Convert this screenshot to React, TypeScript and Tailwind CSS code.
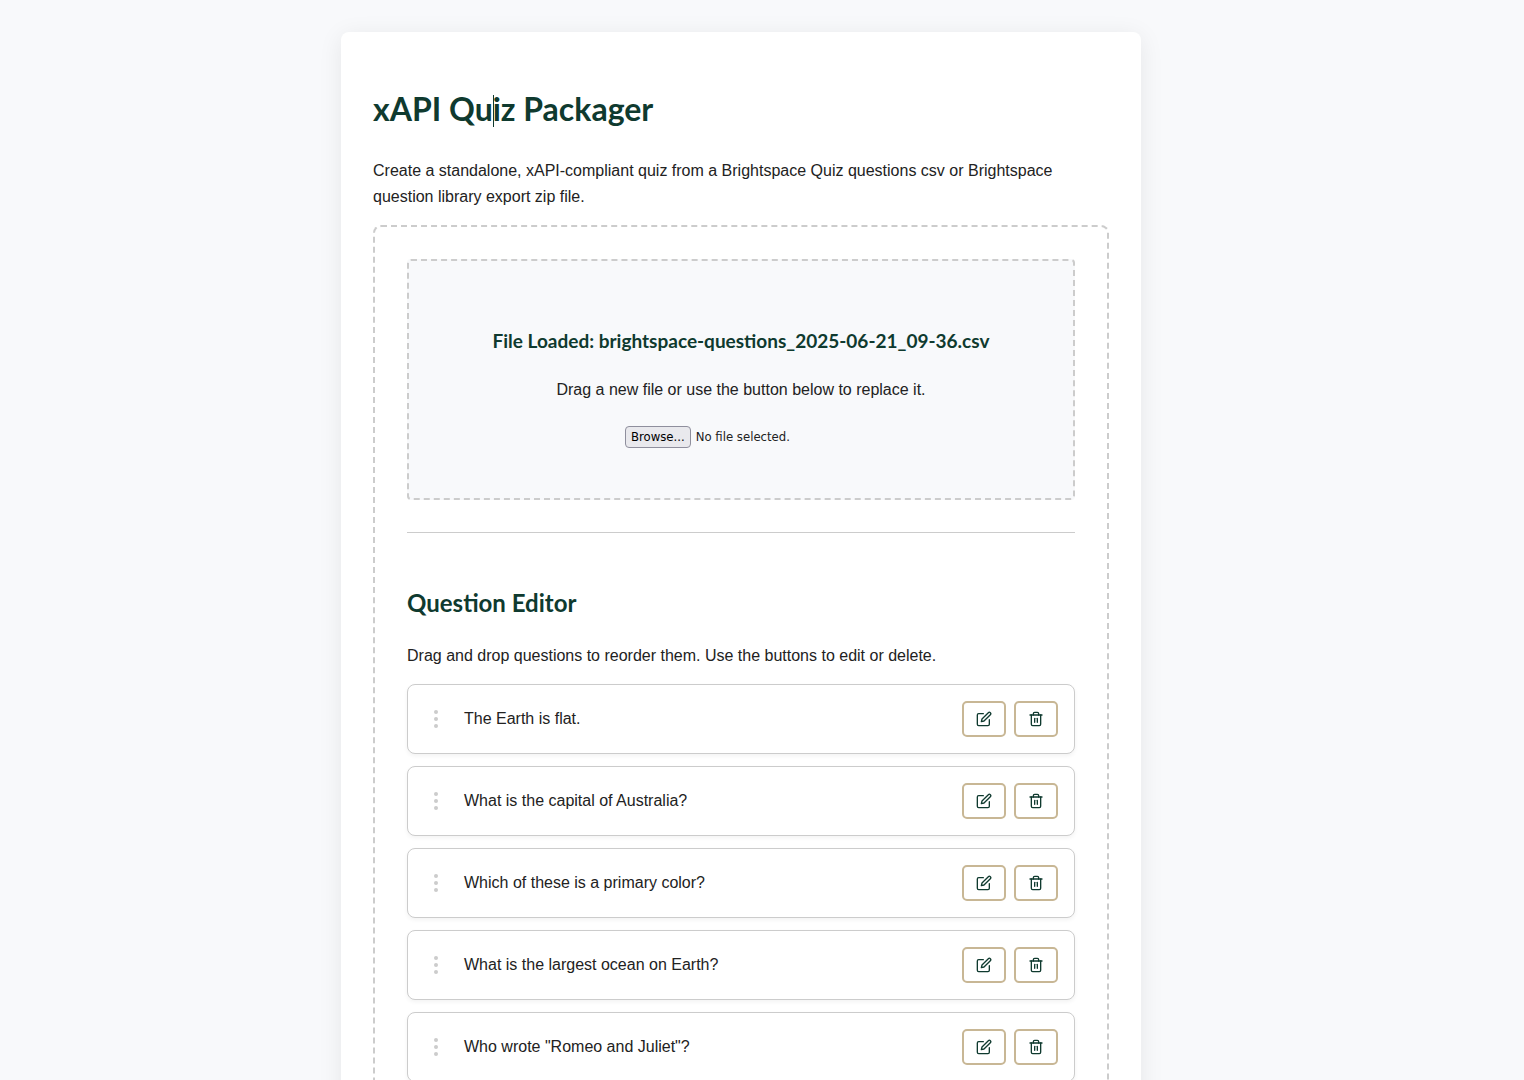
import { FiEdit, FiTrash2 } from "react-icons/fi";

const questions = [
    "The Earth is flat.",
    "What is the capital of Australia?",
    "Which of these is a primary color?",
    "What is the largest ocean on Earth?",
    'Who wrote "Romeo and Juliet"?',
];

const iconButton =
    "flex h-9 w-11 items-center justify-center rounded-[5px] border-2 border-[#c8b795] bg-white text-[#0f3a2f]";

function DragHandle() {
    return (
        <svg width="24" height="24" viewBox="0 0 24 24" fill="#cccccc" aria-hidden="true">
            <circle cx="12" cy="5" r="2" />
            <circle cx="12" cy="12" r="2" />
            <circle cx="12" cy="19" r="2" />
        </svg>
    );
}

function QuestionItem({ text }: { text: string }) {
    return (
        <li className="flex items-center gap-4 rounded-lg border border-[#cccccc] bg-white p-4 shadow-[0_2px_4px_rgba(0,0,0,0.05)]">
            <span className="cursor-grab">
                <DragHandle />
            </span>
            <span className="flex-1">{text}</span>
            <div className="flex gap-2">
                <button type="button" className={iconButton} aria-label="Edit question">
                    <FiEdit size={16} />
                </button>
                <button type="button" className={iconButton} aria-label="Delete question">
                    <FiTrash2 size={16} />
                </button>
            </div>
        </li>
    );
}

function FilePicker() {
    return (
        <div className="mt-[23px] flex w-58 items-center gap-[5px] font-['DejaVu_Sans_Condensed','DejaVu_Sans',sans-serif] text-[13px] leading-5 text-[#222222]">
            <input id="quiz-file" type="file" accept=".csv,.zip" className="sr-only" />
            <label
                htmlFor="quiz-file"
                className="flex h-[22px] items-center rounded border border-[#8f8f9d] bg-[#e9e9ed] px-[5px] text-black"
            >
                Browse...
            </label>
            <span>No file selected.</span>
        </div>
    );
}

export default function App() {
    return (
        <div className="min-h-screen bg-[#f8f9fb] py-8 pr-[42px] font-['Liberation_Sans',Arial,sans-serif] text-base leading-[26px] text-[#222222]">
            <main className="mx-auto max-w-[800px] rounded-lg bg-white p-8 shadow-[0_4px_24px_rgba(0,0,0,0.08)]">
                <h1 className="mt-5 mb-6 font-['Lato',sans-serif] text-[32px] leading-[50px] font-bold text-[#0f3a2f]">
                    xAPI Qu
                    {/* text caret */}
                    <span className="relative">
                        <span className="absolute top-1.5 left-0 h-8 w-px bg-[#0f3a2f]" />
                    </span>
                    iz Packager
                </h1>
                <p className="mb-[15px]">
                    Create a standalone, xAPI-compliant quiz from a Brightspace Quiz questions csv or Brightspace
                    question library export zip file.
                </p>
                <div className="rounded-lg border-2 border-dashed border-[#cccccc] p-8">
                    <section className="flex flex-col items-center rounded border-2 border-dashed border-[#cccccc] bg-[#f8f9fb] px-12 pt-[65px] pb-[50px] text-center">
                        <h3 className="mb-[21px] font-['Lato',sans-serif] text-[19px] leading-[30px] font-bold text-[#0f3a2f]">
                            File Loaded: brightspace-questions_2025-06-21_09-36.csv
                        </h3>
                        <p>Drag a new file or use the button below to replace it.</p>
                        <FilePicker />
                    </section>
                    <hr className="my-8 border-[#cccccc]" />
                    <h2 className="mt-[51px] mb-[21px] font-['Lato',sans-serif] text-2xl leading-[38px] font-bold text-[#0f3a2f]">
                        Question Editor
                    </h2>
                    <p className="mb-[15px]">
                        Drag and drop questions to reorder them. Use the buttons to edit or delete.
                    </p>
                    <ul className="flex flex-col gap-3">
                        {questions.map((question) => (
                            <QuestionItem key={question} text={question} />
                        ))}
                    </ul>
                </div>
            </main>
        </div>
    );
}
